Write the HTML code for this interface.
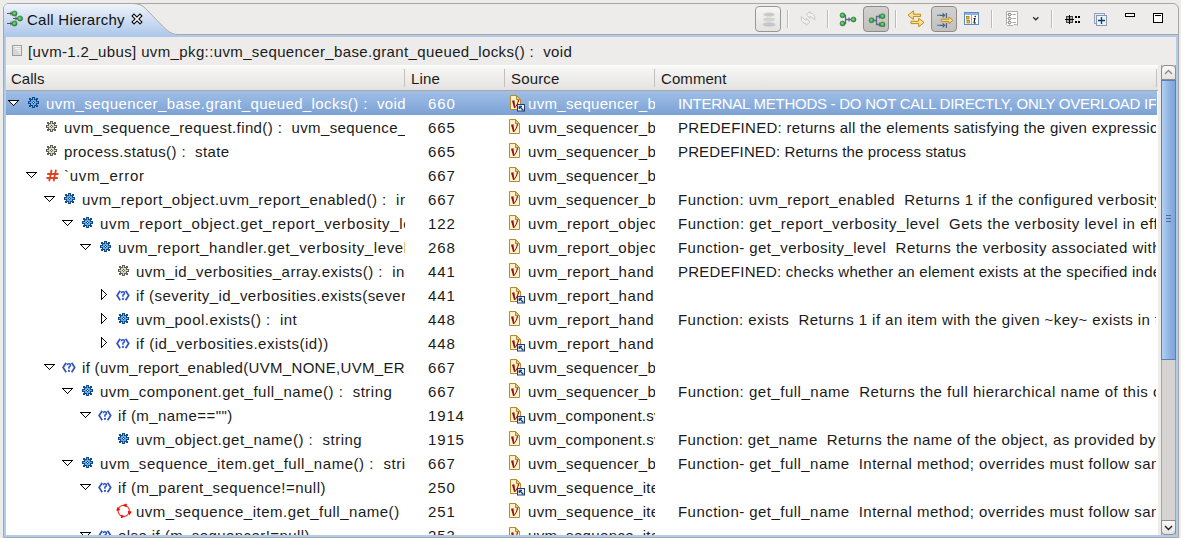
<!DOCTYPE html>
<html><head><meta charset="utf-8"><style>
*{box-sizing:border-box}
html,body{margin:0;padding:0}
body{width:1181px;height:538px;overflow:hidden;background:#edecea;position:relative;font-family:"Liberation Sans",sans-serif;font-size:15px;color:#1a1a1a}
.a{position:absolute}
.t{position:absolute;height:24px;line-height:24px;white-space:pre}
.row{position:absolute;left:6px;width:1151px;height:24px}
.sel{background:linear-gradient(#a0bfe7,#7ba1d4)}
.c{position:absolute;height:24px;line-height:24px;white-space:pre;overflow:hidden}
.sep{position:absolute;width:1px;background:#c2c0bd;top:69px;height:18px}
.tsep{position:absolute;width:1px;background:#bdbbb8;top:10px;height:18px;box-shadow:1px 0 0 #fbfbfa}
.btn{position:absolute;top:6px;width:26px;height:26px;border:1px solid #9a9896;border-radius:4px}
</style></head><body>

<svg width="0" height="0" style="position:absolute"><defs>
<g id="gb"><rect x="4" y="0" width="3" height="1" fill="#0b4a8c"/><rect x="1" y="1" width="2" height="1" fill="#0b4a8c"/><rect x="4" y="1" width="1" height="1" fill="#0b4a8c"/><rect x="5" y="1" width="1" height="1" fill="#78a6d8"/><rect x="6" y="1" width="1" height="1" fill="#0b4a8c"/><rect x="8" y="1" width="2" height="1" fill="#0b4a8c"/><rect x="1" y="2" width="4" height="1" fill="#0b4a8c"/><rect x="5" y="2" width="1" height="1" fill="#78a6d8"/><rect x="6" y="2" width="4" height="1" fill="#0b4a8c"/><rect x="2" y="3" width="1" height="1" fill="#0b4a8c"/><rect x="3" y="3" width="5" height="1" fill="#78a6d8"/><rect x="8" y="3" width="1" height="1" fill="#0b4a8c"/><rect x="0" y="4" width="3" height="1" fill="#0b4a8c"/><rect x="3" y="4" width="2" height="1" fill="#78a6d8"/><rect x="5" y="4" width="1" height="1" fill="#0b4a8c"/><rect x="6" y="4" width="2" height="1" fill="#78a6d8"/><rect x="8" y="4" width="3" height="1" fill="#0b4a8c"/><rect x="0" y="5" width="1" height="1" fill="#0b4a8c"/><rect x="1" y="5" width="3" height="1" fill="#78a6d8"/><rect x="4" y="5" width="1" height="1" fill="#0b4a8c"/><rect x="5" y="5" width="1" height="1" fill="#ffffff"/><rect x="6" y="5" width="1" height="1" fill="#0b4a8c"/><rect x="7" y="5" width="3" height="1" fill="#78a6d8"/><rect x="10" y="5" width="1" height="1" fill="#0b4a8c"/><rect x="0" y="6" width="3" height="1" fill="#0b4a8c"/><rect x="3" y="6" width="2" height="1" fill="#78a6d8"/><rect x="5" y="6" width="1" height="1" fill="#0b4a8c"/><rect x="6" y="6" width="2" height="1" fill="#78a6d8"/><rect x="8" y="6" width="3" height="1" fill="#0b4a8c"/><rect x="2" y="7" width="1" height="1" fill="#0b4a8c"/><rect x="3" y="7" width="5" height="1" fill="#78a6d8"/><rect x="8" y="7" width="1" height="1" fill="#0b4a8c"/><rect x="1" y="8" width="4" height="1" fill="#0b4a8c"/><rect x="5" y="8" width="1" height="1" fill="#78a6d8"/><rect x="6" y="8" width="4" height="1" fill="#0b4a8c"/><rect x="1" y="9" width="2" height="1" fill="#0b4a8c"/><rect x="4" y="9" width="1" height="1" fill="#0b4a8c"/><rect x="5" y="9" width="1" height="1" fill="#78a6d8"/><rect x="6" y="9" width="1" height="1" fill="#0b4a8c"/><rect x="8" y="9" width="2" height="1" fill="#0b4a8c"/><rect x="4" y="10" width="3" height="1" fill="#0b4a8c"/></g>
<g id="gg"><rect x="4" y="0" width="3" height="1" fill="#5e5f57"/><rect x="1" y="1" width="2" height="1" fill="#5e5f57"/><rect x="4" y="1" width="1" height="1" fill="#5e5f57"/><rect x="5" y="1" width="1" height="1" fill="#d6d9bb"/><rect x="6" y="1" width="1" height="1" fill="#5e5f57"/><rect x="8" y="1" width="2" height="1" fill="#5e5f57"/><rect x="1" y="2" width="4" height="1" fill="#5e5f57"/><rect x="5" y="2" width="1" height="1" fill="#d6d9bb"/><rect x="6" y="2" width="4" height="1" fill="#5e5f57"/><rect x="2" y="3" width="1" height="1" fill="#5e5f57"/><rect x="3" y="3" width="5" height="1" fill="#d6d9bb"/><rect x="8" y="3" width="1" height="1" fill="#5e5f57"/><rect x="0" y="4" width="3" height="1" fill="#5e5f57"/><rect x="3" y="4" width="2" height="1" fill="#d6d9bb"/><rect x="5" y="4" width="1" height="1" fill="#5e5f57"/><rect x="6" y="4" width="2" height="1" fill="#d6d9bb"/><rect x="8" y="4" width="3" height="1" fill="#5e5f57"/><rect x="0" y="5" width="1" height="1" fill="#5e5f57"/><rect x="1" y="5" width="3" height="1" fill="#d6d9bb"/><rect x="4" y="5" width="1" height="1" fill="#5e5f57"/><rect x="5" y="5" width="1" height="1" fill="#ffffff"/><rect x="6" y="5" width="1" height="1" fill="#5e5f57"/><rect x="7" y="5" width="3" height="1" fill="#d6d9bb"/><rect x="10" y="5" width="1" height="1" fill="#5e5f57"/><rect x="0" y="6" width="3" height="1" fill="#5e5f57"/><rect x="3" y="6" width="2" height="1" fill="#d6d9bb"/><rect x="5" y="6" width="1" height="1" fill="#5e5f57"/><rect x="6" y="6" width="2" height="1" fill="#d6d9bb"/><rect x="8" y="6" width="3" height="1" fill="#5e5f57"/><rect x="2" y="7" width="1" height="1" fill="#5e5f57"/><rect x="3" y="7" width="5" height="1" fill="#d6d9bb"/><rect x="8" y="7" width="1" height="1" fill="#5e5f57"/><rect x="1" y="8" width="4" height="1" fill="#5e5f57"/><rect x="5" y="8" width="1" height="1" fill="#d6d9bb"/><rect x="6" y="8" width="4" height="1" fill="#5e5f57"/><rect x="1" y="9" width="2" height="1" fill="#5e5f57"/><rect x="4" y="9" width="1" height="1" fill="#5e5f57"/><rect x="5" y="9" width="1" height="1" fill="#d6d9bb"/><rect x="6" y="9" width="1" height="1" fill="#5e5f57"/><rect x="8" y="9" width="2" height="1" fill="#5e5f57"/><rect x="4" y="10" width="3" height="1" fill="#5e5f57"/></g>
<g id="dn"><rect x="0" y="0" width="11" height="1" fill="#000"/><rect x="1" y="1" width="1" height="1" fill="#000"/><rect x="2" y="1" width="7" height="1" fill="#fff"/><rect x="9" y="1" width="1" height="1" fill="#000"/><rect x="2" y="2" width="1" height="1" fill="#000"/><rect x="3" y="2" width="5" height="1" fill="#fff"/><rect x="8" y="2" width="1" height="1" fill="#000"/><rect x="3" y="3" width="1" height="1" fill="#000"/><rect x="4" y="3" width="3" height="1" fill="#fff"/><rect x="7" y="3" width="1" height="1" fill="#000"/><rect x="4" y="4" width="1" height="1" fill="#000"/><rect x="5" y="4" width="1" height="1" fill="#fff"/><rect x="6" y="4" width="1" height="1" fill="#000"/><rect x="5" y="5" width="1" height="1" fill="#000"/></g>
<g id="rt"><rect x="0" y="0" width="1" height="1" fill="#000"/><rect x="0" y="1" width="2" height="1" fill="#000"/><rect x="0" y="2" width="1" height="1" fill="#000"/><rect x="1" y="2" width="1" height="1" fill="#fff"/><rect x="2" y="2" width="1" height="1" fill="#000"/><rect x="0" y="3" width="1" height="1" fill="#000"/><rect x="1" y="3" width="2" height="1" fill="#fff"/><rect x="3" y="3" width="1" height="1" fill="#000"/><rect x="0" y="4" width="1" height="1" fill="#000"/><rect x="1" y="4" width="3" height="1" fill="#fff"/><rect x="4" y="4" width="1" height="1" fill="#000"/><rect x="0" y="5" width="1" height="1" fill="#000"/><rect x="1" y="5" width="4" height="1" fill="#fff"/><rect x="5" y="5" width="1" height="1" fill="#000"/><rect x="0" y="6" width="1" height="1" fill="#000"/><rect x="1" y="6" width="3" height="1" fill="#fff"/><rect x="4" y="6" width="1" height="1" fill="#000"/><rect x="0" y="7" width="1" height="1" fill="#000"/><rect x="1" y="7" width="2" height="1" fill="#fff"/><rect x="3" y="7" width="1" height="1" fill="#000"/><rect x="0" y="8" width="1" height="1" fill="#000"/><rect x="1" y="8" width="1" height="1" fill="#fff"/><rect x="2" y="8" width="1" height="1" fill="#000"/><rect x="0" y="9" width="2" height="1" fill="#000"/><rect x="0" y="10" width="1" height="1" fill="#000"/></g>
<g id="hs" stroke="#dc4420" stroke-width="1.8" fill="none"><path d="M5.6 0.8 L3.2 12.2 M10 0.8 L7.6 12.2 M1.2 5 H12.5 M0.5 9 H11.8"/></g>
<g id="cd"><g fill="none" stroke="#2f52c4" stroke-width="1.7"><path d="M4.2 0.8 L1.1 5.5 L4.2 10.2 M9.6 0.8 L12.7 5.5 L9.6 10.2"/><path d="M5.2 3.2 Q5.3 1.7 6.9 1.7 Q8.5 1.7 8.5 3.1 Q8.4 4.3 6.9 5.2 V6.8" stroke-width="1.5"/></g><rect x="6" y="7.9" width="1.9" height="1.9" fill="#2f52c4"/></g>
<g id="rc"><circle cx="7.7" cy="7.9" r="5.6" fill="none" stroke="#ff2a2a" stroke-width="1.1"/><g fill="none" stroke="#ff0000" stroke-width="1.5" stroke-linejoin="miter"><path d="M10.7 1.2 L8.2 2.3 L10.5 3.5"/><path d="M12.4 8.2 L13.6 10.6 L14.9 8.4"/><path d="M4.8 12.4 L7.3 13.5 L4.9 14.7"/><path d="M0.9 7.6 L2 5.2 L3.4 7.3"/></g></g>
<g id="src"><path d="M0.5 0.5 H6.5 L10.5 4.5 V14.5 H0.5 Z" fill="#fdf1c9" stroke="#b8892a"/><path d="M6.5 0.5 V4.5 H10.5 Z" fill="#e8c878" stroke="#b8892a" stroke-linejoin="round"/><path d="M2 5.8 L4.4 5.2 L5.3 12.6 L4.2 13.2 Z" fill="#8e1414"/><path d="M8.5 5.6 Q7.8 9 5.2 12.6" fill="none" stroke="#8e1414" stroke-width="1"/><circle cx="8.4" cy="5.8" r="0.8" fill="#8e1414"/></g>
<g id="ov"><rect x="7.5" y="9.5" width="7" height="6.5" fill="#eef3fa" stroke="#1d3f6e"/><path d="M9.5 11.5 L13.5 15.5 M9.3 11.3 H12 M9.3 11.3 V14" stroke="#1d3f6e" stroke-width="1.3" fill="none"/></g>
<radialGradient id="gc" cx="0.45" cy="0.45" r="0.6"><stop offset="0" stop-color="#9ed89a"/><stop offset="0.55" stop-color="#3fa84c"/><stop offset="1" stop-color="#237a33"/></radialGradient>
</defs></svg>
<div class="a" style="left:3px;top:3px;width:1176px;height:535px;border:1px solid #a9a7a4;border-radius:6px 6px 0 0;background:#edecea"></div>
<div class="a" style="left:4px;top:35px;width:1174px;height:502px;background:#b1cbeb"></div>
<svg class="a" style="left:0;top:0" width="200" height="40">
<defs><linearGradient id="tg" x1="0" y1="0" x2="0" y2="1"><stop offset="0" stop-color="#eef3fa"/><stop offset="1" stop-color="#abc6e9"/></linearGradient></defs>
<path d="M4 37 V9 Q4 4 9 4 H134 C139 4 142 5.5 145 8.5 L162 26 C166 30 171 35 178 35 H200 V37 Z" fill="url(#tg)"/>
<path d="M133 3.5 C139 3.5 142.5 5.5 145.5 8.5 L162.5 26 C166.5 30 171 34.5 178 34.5 H200" fill="none" stroke="#a9a7a4" stroke-width="1"/>
</svg>
<div class="a" style="left:178px;top:34px;width:1000px;height:1px;background:#a9a7a4"></div>
<div class="a" style="left:178px;top:35px;width:1000px;height:2px;background:#b1cbeb"></div>
<div class="a" style="left:6px;top:37px;width:1170px;height:498px;background:#edecea"></div>
<svg class="a" style="left:6px;top:10px" width="18" height="17">
<g stroke="#555" stroke-width="1"><path d="M1 3.5 H7 M5 1.5 V5.5"/><path d="M7 8.5 H12 M10 6.5 V10.5"/><path d="M1 13.5 H7 M5 11.5 V15.5"/></g>
<g fill="url(#gc)" stroke="#2a7a38" stroke-width="0.6"><circle cx="8.5" cy="3.5" r="2.6"/><circle cx="14" cy="8.5" r="2.6"/><circle cx="8.5" cy="13.5" r="2.6"/></g>
</svg>
<div class="t" style="left:27px;top:9px;height:22px;line-height:22px;color:#111;letter-spacing:0.256px">Call Hierarchy</div>
<svg class="a" style="left:131px;top:13px" width="12" height="12"><path d="M3 3 L9 9 M9 3 L3 9" stroke="#000" stroke-width="3.8" stroke-linecap="square"/><path d="M3 3 L9 9 M9 3 L3 9" stroke="#fff" stroke-width="1.7" stroke-linecap="square"/></svg>
<div class="btn" style="left:755px;background:linear-gradient(#f6f5f4,#e3e2e0)"></div>
<svg class="a" style="left:761px;top:11px" width="16" height="17"><ellipse cx="8" cy="3.5" rx="5.5" ry="2" fill="#cdc9c6"/><ellipse cx="8" cy="8.5" rx="6" ry="2" fill="#cfd4cc"/><ellipse cx="8" cy="13.5" rx="6.5" ry="2.2" fill="#c4c6cb"/></svg>
<div class="tsep" style="left:787px"></div>
<svg class="a" style="left:798px;top:8px" width="22" height="22"><g fill="#f3f2f0" stroke="#c9c7c4" stroke-width="1" stroke-linejoin="round"><path d="M8.2 6.7 L11.9 3.3 V4.9 Q15 5 16.8 8.2 V11.9 L13.9 9.4 Q13 8.3 11.9 8.4 V10.2 Z"/><path d="M11.9 13.9 L8.2 17.3 V15.7 Q5.1 15.6 3.3 12.4 V8.7 L6.2 11.2 Q7.1 12.3 8.2 12.2 V10.4 Z"/></g></svg>
<div class="tsep" style="left:827px"></div>
<svg class="a" style="left:838px;top:11px" width="20" height="16"><g stroke="#5d6a86" stroke-width="1.3" fill="none"><path d="M4.5 4.5 H7.5 V12.5 H4.5 M7.5 8.5 H13 M11 6.5 V10.5"/></g><g fill="url(#gc)" stroke="#2a7e38" stroke-width="0.6"><circle cx="4.5" cy="4.3" r="2.5"/><circle cx="4.5" cy="12.5" r="2.5"/><circle cx="15.5" cy="8.5" r="2.5"/></g></svg>
<div class="btn" style="left:863px;background:linear-gradient(#d3d1cf,#c2c0bd);border-color:#8e8c8a"></div>
<svg class="a" style="left:867px;top:11px" width="20" height="16"><g stroke="#5d6a86" stroke-width="1.3" fill="none"><path d="M4.5 9.5 H9.5 M15 5.5 H9.5 V13.5 H15 M12.5 3.5 V7.5 M12.5 11.5 V15.5"/></g><g fill="url(#gc)" stroke="#2a7e38" stroke-width="0.6"><circle cx="4.5" cy="9.3" r="2.5"/><circle cx="15.5" cy="5.2" r="2.5"/><circle cx="15.5" cy="13.4" r="2.5"/></g></svg>
<div class="tsep" style="left:895px"></div>
<svg class="a" style="left:906px;top:10px" width="20" height="18"><g fill="#fbe49a" stroke="#c28a0e" stroke-width="1" stroke-linejoin="round"><path d="M2 5.2 L7.4 0.8 V4.2 H14.6 V6.4 H7.4 V9.5 Z"/><path d="M18 12.4 L12.7 8.3 V11.3 H5 V13.6 H12.7 V16.8 Z"/></g></svg>
<div class="btn" style="left:931px;background:linear-gradient(#d3d1cf,#c2c0bd);border-color:#8e8c8a"></div>
<svg class="a" style="left:935px;top:11px" width="20" height="18"><g stroke="#4e6282" stroke-width="1.2" fill="none"><path d="M4 4.3 H9.6 M7.6 2.3 L9.6 4.3 L7.6 6.3 M11.4 2 V7"/><path d="M4 14.3 H9.6 M7.6 12.3 L9.6 14.3 L7.6 16.3 M11.4 12 V17"/></g><g stroke="#3a90d0" stroke-width="1.2"><path d="M2 4.3 H5 M2 14.3 H5"/></g><path d="M6.2 8.2 H14 V6 L17.8 9.3 L14 12.6 V10.4 H6.2 Z" fill="#fbe49a" stroke="#c28a0e" stroke-width="1" stroke-linejoin="round"/></svg>
<svg class="a" style="left:963px;top:11px" width="17" height="15"><rect x="1.5" y="1.5" width="14" height="12" fill="#fff" stroke="#5d8ac8"/><rect x="2" y="2" width="13" height="2" fill="#8fb2e2"/><path d="M8.5 4 V13" stroke="#a9a88e"/><rect x="3.5" y="5.5" width="2.5" height="2.5" fill="#f0c838" stroke="#a07a10" stroke-width="0.8"/><rect x="4" y="9.5" width="2.5" height="2.5" fill="#f0c838" stroke="#a07a10" stroke-width="0.8"/><path d="M10.5 7.5 H12 L11 11.5 Q11 12.5 12.8 11.8" fill="none" stroke="#111" stroke-width="1.1"/><rect x="11.6" y="4.8" width="1.3" height="1.3" fill="#111"/></svg>
<div class="tsep" style="left:991px"></div>
<svg class="a" style="left:1005px;top:10px" width="14" height="18"><path d="M1.5 1.5 H12.5 V15.5 L11.5 14.5 H9 L8 15.5 H2.5 L1.5 14.5 Z" fill="#fff" stroke="#b0aeab"/><g fill="none" stroke="#5a5a5a" stroke-width="1"><path d="M4.5 2.9 L6.1 4.5 L4.5 6.1 L2.9 4.5 Z M4.5 6.9 L6.1 8.5 L4.5 10.1 L2.9 8.5 Z M4.5 10.9 L6.1 12.5 L4.5 14.1 L2.9 12.5 Z"/></g><path d="M7.5 4.5 H11 M7.5 8.5 H11 M7.5 12.5 H11" stroke="#aaa" stroke-width="1"/></svg>
<svg class="a" style="left:1032px;top:16px" width="8" height="6"><path d="M1.2 1.2 L3.8 3.8 L6.4 1.2" fill="none" stroke="#2a2a2a" stroke-width="1.3"/></svg>
<div class="tsep" style="left:1051px"></div>
<svg class="a" style="left:1064px;top:14px" width="17" height="11" shape-rendering="crispEdges"><rect x="2" y="2" width="7" height="7" fill="#444"/><rect x="3" y="3" width="5" height="5" fill="#a8a8a8"/><rect x="1" y="5" width="9" height="1" fill="#000"/><rect x="5" y="1" width="1" height="9" fill="#000"/><g fill="#000"><rect x="11" y="2" width="2" height="2"/><rect x="14" y="2" width="2" height="2"/><rect x="11" y="7" width="2" height="2"/><rect x="14" y="7" width="2" height="2"/></g></svg>
<svg class="a" style="left:1093px;top:12px" width="16" height="16"><rect x="1.5" y="1.5" width="10" height="10" fill="#dcedf9" stroke="#97a3b8"/><rect x="3.5" y="3.5" width="10" height="10" fill="#e6f4fc" stroke="#8c97ad"/><path d="M8.5 5 V12 M5 8.5 H12" stroke="#0d3f73" stroke-width="1.3"/></svg>
<div class="a" style="left:1125px;top:13px;width:10px;height:4px;border:1px solid #000;background:#fff"></div>
<div class="a" style="left:1153px;top:13px;width:10px;height:10px;border:1px solid #000;background:#fff"></div><div class="a" style="left:1155px;top:15px;width:6px;height:1px;background:#000"></div>
<svg class="a" style="left:12px;top:45px" width="10" height="11"><rect x="0.5" y="0.5" width="9" height="10" fill="#d6d6d5" stroke="#9b9b9a"/><path d="M1 1.5 H9 M3 3.5 H9 M5 5.5 H9 M7 7.5 H9 M8 9.3 H9" stroke="#f6f6f6" stroke-width="1"/></svg>
<div class="t" style="left:28px;top:40px;letter-spacing:0.372px">[uvm-1.2_ubus] uvm_pkg::uvm_sequencer_base.grant_queued_locks() :  void</div>
<div class="a" style="left:6px;top:65px;width:1152px;height:470px;background:#fff"></div>
<div class="a" style="left:6px;top:65px;width:1152px;height:25px;background:linear-gradient(#fdfdfd 0,#fdfdfd 1px,#f7f7f6 2px,#e3e2e0 100%)"></div>
<div class="a" style="left:6px;top:90px;width:1152px;height:1px;background:#aaa7a2"></div>
<div class="a" style="left:1158px;top:65px;width:3px;height:470px;background:#edecea"></div>
<div class="sep" style="left:404px"></div>
<div class="sep" style="left:504px"></div>
<div class="sep" style="left:654px"></div>
<div class="sep" style="left:1156px"></div>
<div class="t" style="left:11px;top:67px;letter-spacing:0.009px">Calls</div>
<div class="t" style="left:411px;top:67px;letter-spacing:0.139px">Line</div>
<div class="t" style="left:511px;top:67px;letter-spacing:0.153px">Source</div>
<div class="t" style="left:661px;top:67px;letter-spacing:0.071px">Comment</div>
<div class="a" style="left:0;top:0;width:1157px;height:535px;overflow:hidden">
<div class="row sel" style="top:91px"></div>
<svg class="a" style="left:8px;top:100px" width="11" height="6" shape-rendering="crispEdges"><use href="#dn"/></svg>
<svg class="a" style="left:28px;top:97px" width="11" height="11" shape-rendering="crispEdges"><use href="#gb"/></svg>
<div class="c" style="left:46px;top:92px;width:359px;color:#fff;letter-spacing:0.404px">uvm_sequencer_base.grant_queued_locks() :  void</div>
<div class="c" style="left:428px;top:92px;width:76px;color:#fff;letter-spacing:0.951px">660</div>
<svg class="a" style="left:510px;top:95px" width="16" height="17"><use href="#src"/><use href="#ov"/></svg>
<div class="c" style="left:528px;top:92px;width:127px;color:#fff;letter-spacing:0.314px">uvm_sequencer_base.sv</div>
<div class="c" style="left:678px;top:92px;width:478px;color:#fff;letter-spacing:-0.255px">INTERNAL METHODS - DO NOT CALL DIRECTLY, ONLY OVERLOAD IF</div>

<svg class="a" style="left:46px;top:121px" width="11" height="11" shape-rendering="crispEdges"><use href="#gg"/></svg>
<div class="c" style="left:64px;top:116px;width:341px;letter-spacing:0.396px">uvm_sequence_request.find() :  uvm_sequence_item[$]</div>
<div class="c" style="left:428px;top:116px;width:76px;letter-spacing:0.951px">665</div>
<svg class="a" style="left:509px;top:119px" width="16" height="17"><use href="#src"/></svg>
<div class="c" style="left:528px;top:116px;width:127px;letter-spacing:0.314px">uvm_sequencer_base.sv</div>
<div class="c" style="left:678px;top:116px;width:478px;letter-spacing:0.291px">PREDEFINED: returns all the elements satisfying the given expression</div>

<svg class="a" style="left:46px;top:145px" width="11" height="11" shape-rendering="crispEdges"><use href="#gg"/></svg>
<div class="c" style="left:64px;top:140px;width:341px;letter-spacing:0.384px">process.status() :  state</div>
<div class="c" style="left:428px;top:140px;width:76px;letter-spacing:0.951px">665</div>
<svg class="a" style="left:509px;top:143px" width="16" height="17"><use href="#src"/></svg>
<div class="c" style="left:528px;top:140px;width:127px;letter-spacing:0.314px">uvm_sequencer_base.sv</div>
<div class="c" style="left:678px;top:140px;width:478px;letter-spacing:0.124px">PREDEFINED: Returns the process status</div>
<svg class="a" style="left:26px;top:172px" width="11" height="6" shape-rendering="crispEdges"><use href="#dn"/></svg>
<svg class="a" style="left:46px;top:169px" width="13" height="13"><use href="#hs"/></svg>
<div class="c" style="left:64px;top:164px;width:341px;letter-spacing:0.744px">`uvm_error</div>
<div class="c" style="left:428px;top:164px;width:76px;letter-spacing:0.951px">667</div>
<svg class="a" style="left:509px;top:167px" width="16" height="17"><use href="#src"/></svg>
<div class="c" style="left:528px;top:164px;width:127px;letter-spacing:0.314px">uvm_sequencer_base.sv</div>
<svg class="a" style="left:44px;top:196px" width="11" height="6" shape-rendering="crispEdges"><use href="#dn"/></svg>
<svg class="a" style="left:64px;top:193px" width="11" height="11" shape-rendering="crispEdges"><use href="#gb"/></svg>
<div class="c" style="left:82px;top:188px;width:323px;letter-spacing:0.511px">uvm_report_object.uvm_report_enabled() :  int</div>
<div class="c" style="left:428px;top:188px;width:76px;letter-spacing:0.951px">667</div>
<svg class="a" style="left:509px;top:191px" width="16" height="17"><use href="#src"/></svg>
<div class="c" style="left:528px;top:188px;width:127px;letter-spacing:0.314px">uvm_sequencer_base.sv</div>
<div class="c" style="left:678px;top:188px;width:478px;letter-spacing:0.482px">Function: uvm_report_enabled  Returns 1 if the configured verbosity</div>
<svg class="a" style="left:62px;top:220px" width="11" height="6" shape-rendering="crispEdges"><use href="#dn"/></svg>
<svg class="a" style="left:82px;top:217px" width="11" height="11" shape-rendering="crispEdges"><use href="#gb"/></svg>
<div class="c" style="left:100px;top:212px;width:305px;letter-spacing:0.658px">uvm_report_object.get_report_verbosity_level() :  int</div>
<div class="c" style="left:428px;top:212px;width:76px;letter-spacing:0.951px">122</div>
<svg class="a" style="left:509px;top:215px" width="16" height="17"><use href="#src"/></svg>
<div class="c" style="left:528px;top:212px;width:127px;letter-spacing:0.554px">uvm_report_object.svh</div>
<div class="c" style="left:678px;top:212px;width:478px;letter-spacing:0.548px">Function: get_report_verbosity_level  Gets the verbosity level in effect</div>
<svg class="a" style="left:80px;top:244px" width="11" height="6" shape-rendering="crispEdges"><use href="#dn"/></svg>
<svg class="a" style="left:100px;top:241px" width="11" height="11" shape-rendering="crispEdges"><use href="#gb"/></svg>
<div class="c" style="left:118px;top:236px;width:287px;letter-spacing:0.626px">uvm_report_handler.get_verbosity_level() :  int</div>
<div class="c" style="left:428px;top:236px;width:76px;letter-spacing:0.951px">268</div>
<svg class="a" style="left:509px;top:239px" width="16" height="17"><use href="#src"/></svg>
<div class="c" style="left:528px;top:236px;width:127px;letter-spacing:0.554px">uvm_report_object.svh</div>
<div class="c" style="left:678px;top:236px;width:478px;letter-spacing:0.457px">Function- get_verbosity_level  Returns the verbosity associated with</div>

<svg class="a" style="left:118px;top:265px" width="11" height="11" shape-rendering="crispEdges"><use href="#gg"/></svg>
<div class="c" style="left:136px;top:260px;width:269px;letter-spacing:0.467px">uvm_id_verbosities_array.exists() :  int</div>
<div class="c" style="left:428px;top:260px;width:76px;letter-spacing:0.951px">441</div>
<svg class="a" style="left:509px;top:263px" width="16" height="17"><use href="#src"/></svg>
<div class="c" style="left:528px;top:260px;width:127px;letter-spacing:0.577px">uvm_report_handler.svh</div>
<div class="c" style="left:678px;top:260px;width:478px;letter-spacing:0.236px">PREDEFINED: checks whether an element exists at the specified index</div>
<svg class="a" style="left:101px;top:289px" width="6" height="11" shape-rendering="crispEdges"><use href="#rt"/></svg>
<svg class="a" style="left:116px;top:290px" width="14" height="12"><use href="#cd"/></svg>
<div class="c" style="left:136px;top:284px;width:269px;letter-spacing:0.450px">if (severity_id_verbosities.exists(severity))</div>
<div class="c" style="left:428px;top:284px;width:76px;letter-spacing:0.951px">441</div>
<svg class="a" style="left:510px;top:287px" width="16" height="17"><use href="#src"/><use href="#ov"/></svg>
<div class="c" style="left:528px;top:284px;width:127px;letter-spacing:0.577px">uvm_report_handler.svh</div>
<svg class="a" style="left:101px;top:313px" width="6" height="11" shape-rendering="crispEdges"><use href="#rt"/></svg>
<svg class="a" style="left:118px;top:313px" width="11" height="11" shape-rendering="crispEdges"><use href="#gb"/></svg>
<div class="c" style="left:136px;top:308px;width:269px;letter-spacing:0.464px">uvm_pool.exists() :  int</div>
<div class="c" style="left:428px;top:308px;width:76px;letter-spacing:0.951px">448</div>
<svg class="a" style="left:509px;top:311px" width="16" height="17"><use href="#src"/></svg>
<div class="c" style="left:528px;top:308px;width:127px;letter-spacing:0.577px">uvm_report_handler.svh</div>
<div class="c" style="left:678px;top:308px;width:478px;letter-spacing:0.442px">Function: exists  Returns 1 if an item with the given ~key~ exists in the pool</div>
<svg class="a" style="left:101px;top:337px" width="6" height="11" shape-rendering="crispEdges"><use href="#rt"/></svg>
<svg class="a" style="left:116px;top:338px" width="14" height="12"><use href="#cd"/></svg>
<div class="c" style="left:136px;top:332px;width:269px;letter-spacing:0.504px">if (id_verbosities.exists(id))</div>
<div class="c" style="left:428px;top:332px;width:76px;letter-spacing:0.951px">448</div>
<svg class="a" style="left:510px;top:335px" width="16" height="17"><use href="#src"/><use href="#ov"/></svg>
<div class="c" style="left:528px;top:332px;width:127px;letter-spacing:0.577px">uvm_report_handler.svh</div>
<svg class="a" style="left:44px;top:364px" width="11" height="6" shape-rendering="crispEdges"><use href="#dn"/></svg>
<svg class="a" style="left:62px;top:362px" width="14" height="12"><use href="#cd"/></svg>
<div class="c" style="left:82px;top:356px;width:323px;letter-spacing:0.317px">if (uvm_report_enabled(UVM_NONE,UVM_ERROR,id))</div>
<div class="c" style="left:428px;top:356px;width:76px;letter-spacing:0.951px">667</div>
<svg class="a" style="left:510px;top:359px" width="16" height="17"><use href="#src"/><use href="#ov"/></svg>
<div class="c" style="left:528px;top:356px;width:127px;letter-spacing:0.314px">uvm_sequencer_base.sv</div>
<svg class="a" style="left:62px;top:388px" width="11" height="6" shape-rendering="crispEdges"><use href="#dn"/></svg>
<svg class="a" style="left:82px;top:385px" width="11" height="11" shape-rendering="crispEdges"><use href="#gb"/></svg>
<div class="c" style="left:100px;top:380px;width:305px;letter-spacing:0.507px">uvm_component.get_full_name() :  string</div>
<div class="c" style="left:428px;top:380px;width:76px;letter-spacing:0.951px">667</div>
<svg class="a" style="left:509px;top:383px" width="16" height="17"><use href="#src"/></svg>
<div class="c" style="left:528px;top:380px;width:127px;letter-spacing:0.314px">uvm_sequencer_base.sv</div>
<div class="c" style="left:678px;top:380px;width:478px;letter-spacing:0.511px">Function: get_full_name  Returns the full hierarchical name of this object</div>
<svg class="a" style="left:80px;top:412px" width="11" height="6" shape-rendering="crispEdges"><use href="#dn"/></svg>
<svg class="a" style="left:98px;top:410px" width="14" height="12"><use href="#cd"/></svg>
<div class="c" style="left:118px;top:404px;width:287px;letter-spacing:0.426px">if (m_name==&quot;&quot;)</div>
<div class="c" style="left:428px;top:404px;width:76px;letter-spacing:0.851px">1914</div>
<svg class="a" style="left:510px;top:407px" width="16" height="17"><use href="#src"/><use href="#ov"/></svg>
<div class="c" style="left:528px;top:404px;width:127px;letter-spacing:0.226px">uvm_component.svh</div>

<svg class="a" style="left:118px;top:433px" width="11" height="11" shape-rendering="crispEdges"><use href="#gb"/></svg>
<div class="c" style="left:136px;top:428px;width:269px;letter-spacing:0.490px">uvm_object.get_name() :  string</div>
<div class="c" style="left:428px;top:428px;width:76px;letter-spacing:0.851px">1915</div>
<svg class="a" style="left:509px;top:431px" width="16" height="17"><use href="#src"/></svg>
<div class="c" style="left:528px;top:428px;width:127px;letter-spacing:0.226px">uvm_component.svh</div>
<div class="c" style="left:678px;top:428px;width:478px;letter-spacing:0.395px">Function: get_name  Returns the name of the object, as provided by the</div>
<svg class="a" style="left:62px;top:460px" width="11" height="6" shape-rendering="crispEdges"><use href="#dn"/></svg>
<svg class="a" style="left:82px;top:457px" width="11" height="11" shape-rendering="crispEdges"><use href="#gb"/></svg>
<div class="c" style="left:100px;top:452px;width:305px;letter-spacing:0.540px">uvm_sequence_item.get_full_name() :  string</div>
<div class="c" style="left:428px;top:452px;width:76px;letter-spacing:0.951px">667</div>
<svg class="a" style="left:509px;top:455px" width="16" height="17"><use href="#src"/></svg>
<div class="c" style="left:528px;top:452px;width:127px;letter-spacing:0.314px">uvm_sequencer_base.sv</div>
<div class="c" style="left:678px;top:452px;width:478px;letter-spacing:0.458px">Function- get_full_name  Internal method; overrides must follow same</div>
<svg class="a" style="left:80px;top:484px" width="11" height="6" shape-rendering="crispEdges"><use href="#dn"/></svg>
<svg class="a" style="left:98px;top:482px" width="14" height="12"><use href="#cd"/></svg>
<div class="c" style="left:118px;top:476px;width:287px;letter-spacing:0.473px">if (m_parent_sequence!=null)</div>
<div class="c" style="left:428px;top:476px;width:76px;letter-spacing:0.951px">250</div>
<svg class="a" style="left:510px;top:479px" width="16" height="17"><use href="#src"/><use href="#ov"/></svg>
<div class="c" style="left:528px;top:476px;width:127px;letter-spacing:0.350px">uvm_sequence_item.svh</div>

<svg class="a" style="left:116px;top:503px" width="16" height="16"><use href="#rc"/></svg>
<div class="c" style="left:136px;top:500px;width:269px;letter-spacing:0.510px">uvm_sequence_item.get_full_name()</div>
<div class="c" style="left:428px;top:500px;width:76px;letter-spacing:0.951px">251</div>
<svg class="a" style="left:509px;top:503px" width="16" height="17"><use href="#src"/></svg>
<div class="c" style="left:528px;top:500px;width:127px;letter-spacing:0.350px">uvm_sequence_item.svh</div>
<div class="c" style="left:678px;top:500px;width:478px;letter-spacing:0.458px">Function- get_full_name  Internal method; overrides must follow same</div>
<svg class="a" style="left:80px;top:532px" width="11" height="6" shape-rendering="crispEdges"><use href="#dn"/></svg>
<svg class="a" style="left:98px;top:530px" width="14" height="12"><use href="#cd"/></svg>
<div class="c" style="left:118px;top:524px;width:287px;letter-spacing:0.425px">else if (m_sequencer!=null)</div>
<div class="c" style="left:428px;top:524px;width:76px;letter-spacing:0.951px">253</div>
<svg class="a" style="left:509px;top:527px" width="16" height="17"><use href="#src"/></svg>
<div class="c" style="left:528px;top:524px;width:127px;letter-spacing:0.350px">uvm_sequence_item.svh</div>
</div>
<div class="a" style="left:1161px;top:65px;width:15px;height:470px;background:#d6d4d1;border-left:1px solid #a9a6a2;border-right:1px solid #a9a6a2"></div>
<div class="a" style="left:1161px;top:65px;width:15px;height:15px;background:linear-gradient(#fafafa,#e4e3e1);border:1px solid #8f8d8a;border-radius:4px 4px 0 0"></div>
<svg class="a" style="left:1164px;top:69px" width="9" height="6"><path d="M1 5 L4.5 1.5 L8 5" fill="none" stroke="#8a8a8a" stroke-width="1.3"/></svg>
<div class="a" style="left:1161px;top:80px;width:15px;height:280px;background:linear-gradient(90deg,#b4d0f2,#8db2e0 60%,#7ea5d8);border:1px solid #5b80b2"></div>
<svg class="a" style="left:1166px;top:213px" width="6" height="10"><path d="M0 2.5 H5 M0 5.5 H5 M0 8.5 H5" stroke="#4a6a98" stroke-width="1"/></svg>
<div class="a" style="left:1161px;top:520px;width:15px;height:15px;background:linear-gradient(#fafafa,#e4e3e1);border:1px solid #8f8d8a;border-radius:0 0 4px 4px"></div>
<svg class="a" style="left:1164px;top:525px" width="9" height="6"><path d="M1 1 L4.5 4.5 L8 1" fill="none" stroke="#222" stroke-width="1.4"/></svg>
</body></html>
